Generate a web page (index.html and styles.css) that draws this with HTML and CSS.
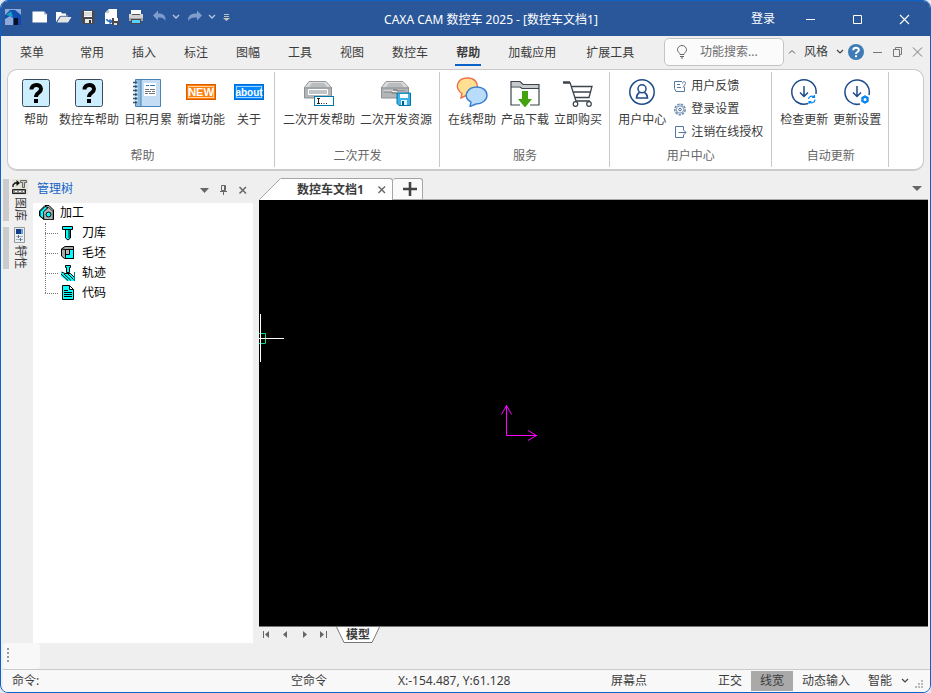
FILE: index.html
```html
<!DOCTYPE html>
<html lang="zh-CN">
<head>
<meta charset="utf-8">
<title>CAXA CAM 数控车 2025</title>
<link rel="stylesheet" href="styles.css">
</head>
<body>
<div class="window">
  <header class="titlebar">
    <div class="quick">
      <svg class="logo" width="16" height="16" viewBox="0 0 16 16"><rect width="16" height="16" fill="#8fa8da"/><path d="M0 9V6L5 1H10L16 6V16H8V9L5 7L0 10Z" fill="#0b4fb0"/><path d="M1 6L6 2L8 8L5 7Z" fill="#1ba3c4"/><path d="M9 9H13V16H9Z" fill="#0a1020"/><path d="M13 8L16 6V16H13Z" fill="#1746a8"/></svg>
      <button class="qbtn" aria-label="新建"><svg width="16" height="16" viewBox="0 0 16 16"><path d="M.5 2.500H12L15 5.500V13.500H.5Z" fill="#fff"/><path d="M12 2.500V5.500H15Z" fill="#a9b8d6"/></svg></button>
      <button class="qbtn" aria-label="打开"><svg width="16" height="16" viewBox="0 0 16 16"><path d="M0 3H5L6 4.500H10V7H4L0 13Z" fill="#fff"/><path d="M4.500 8H15.500L12 13.500H1Z" fill="#e4e4e4"/><path d="M5 6.500H12V7.500H4Z" fill="#b8b8b8"/></svg></button>
      <button class="qbtn" aria-label="保存"><svg width="16" height="16" viewBox="0 0 16 16"><path d="M2 1.500H14.500V15H3.500L1.500 13V2Z" fill="#4a4a4e"/><path d="M4 2H12V8H4Z" fill="#fff"/><path d="M4 4H12M4 6H12" stroke="#bdbdbd"/><path d="M5 10H12V14H5Z" fill="#e8e8e8"/><path d="M9 11H11V14H9Z" fill="#333"/></svg></button>
      <button class="qbtn" aria-label="另存为"><svg width="16" height="16" viewBox="0 0 16 16"><path d="M5 0H13V15H1V4Z" fill="#fff"/><path d="M1 4H5V0Z" fill="#c8c8c8"/><path d="M2.500 10C3 12 5 12.500 7 12.500M5.500 10.500L8 12.500L5.500 14.500" fill="none" stroke="#2b6bc0" stroke-width="1.500"/><path d="M8 9H15V16H8Z" fill="#4a4a4e"/><path d="M10 9H14V12H10Z" fill="#fff"/><path d="M10 14H13V16H10Z" fill="#ddd"/></svg></button>
      <button class="qbtn" aria-label="打印"><svg width="16" height="16" viewBox="0 0 16 16"><path d="M3 1H13V6H3Z" fill="#fff"/><path d="M1 5H15V12H1Z" fill="#d0d0d0"/><path d="M4 5H12V6H4Z" fill="#555"/><path d="M1 9H15V12H1Z" fill="#a8a8a8"/><path d="M3 10H13V15H3Z" fill="#4a4a4a"/><path d="M4 11H12V14H4Z" fill="#5bd0fb"/></svg></button>
      <button class="qbtn" aria-label="撤销"><svg width="16" height="16" viewBox="0 0 16 16"><path d="M6 1.500V4.500H8Q14 5 13.500 12Q12 8.500 8 8.500H6V11.500L1 6.500Z" fill="#7f9ccd"/></svg></button>
      <button class="drop" aria-label="撤销列表"><svg width="8" height="6" viewBox="0 0 8 6"><path d="M1 1L4 4L7 1" fill="none" stroke="#b8c7e2" stroke-width="1.300"/></svg></button>
      <button class="qbtn" aria-label="重做"><svg width="16" height="16" viewBox="0 0 16 16"><path d="M9 1.500V4.500H7Q-.5 5 0 12Q2 8.500 7 8.500H9V11.500L14 6.500Z" fill="#7f9ccd"/></svg></button>
      <button class="drop" aria-label="重做列表"><svg width="8" height="6" viewBox="0 0 8 6"><path d="M1 1L4 4L7 1" fill="none" stroke="#b8c7e2" stroke-width="1.300"/></svg></button>
      <button class="drop tail" aria-label="自定义"><svg width="8" height="8" viewBox="0 0 8 8"><path d="M1 1.500H6M1 3.500H6" stroke="#b9c0cc"/><path d="M0 5H7L3.500 8Z" fill="#c9c4bc"/></svg></button>
    </div>
    <div class="title">CAXA CAM 数控车 2025 - [数控车文档1]</div>
    <div class="caption">
      <button class="login">登录</button>
      <button class="cap" aria-label="最小化"><svg width="12" height="12" viewBox="0 0 12 12"><path d="M1 6.500H10" stroke="#fff"/></svg></button>
      <button class="cap" aria-label="最大化"><svg width="12" height="12" viewBox="0 0 12 12"><path d="M1.500 2.500H9.500V10.500H1.500Z" fill="none" stroke="#fff"/></svg></button>
      <button class="cap" aria-label="关闭"><svg width="12" height="12" viewBox="0 0 12 12"><path d="M1 2L10 11M10 2L1 11" stroke="#fff" stroke-width="1.100"/></svg></button>
    </div>
  </header>

  <nav class="menubar">
    <div class="menus">
      <button class="menu first">菜单</button>
      <button class="menu">常用</button>
      <button class="menu">插入</button>
      <button class="menu">标注</button>
      <button class="menu">图幅</button>
      <button class="menu">工具</button>
      <button class="menu">视图</button>
      <button class="menu">数控车</button>
      <button class="menu active">帮助</button>
      <button class="menu">加载应用</button>
      <button class="menu last">扩展工具</button>
    </div>
    <div class="menuright">
      <label class="search">
        <svg width="12" height="14" viewBox="0 0 12 14"><path d="M4 9.500C4 8 1.500 7 1.500 4.800A4.500 4.300 0 0 1 10.500 4.800C10.500 7 8 8 8 9.500ZM4 11.500H8M5 13H7" fill="none" stroke="#666"/></svg>
        <input type="text" placeholder="功能搜索..." aria-label="功能搜索">
      </label>
      <button class="mini" aria-label="收起功能区"><svg width="8" height="6" viewBox="0 0 8 6"><path d="M1 4.500L4 1.500L7 4.500" fill="none" stroke="#555"/></svg></button>
      <button class="style">风格 <svg width="8" height="6" viewBox="0 0 8 6"><path d="M1 1L4 4L7 1" fill="none" stroke="#444" stroke-width="1.200"/></svg></button>
      <button class="mini help" aria-label="帮助"><svg width="16" height="16" viewBox="0 0 16 16"><circle cx="8" cy="8" r="8" fill="#3f7cb6"/><path d="M5.200 6.200C5.200 2.900 10.800 2.900 10.800 6C10.800 8 8 8 8 10M8 11.300V13.300" fill="none" stroke="#fff" stroke-width="2"/></svg></button>
      <button class="mini" aria-label="文档最小化"><svg width="12" height="12" viewBox="0 0 12 12"><path d="M1 6.500H10" stroke="#777"/></svg></button>
      <button class="mini" aria-label="文档还原"><svg width="12" height="12" viewBox="0 0 12 12"><path d="M1.500 3.500H7.500V10.500H1.500ZM3.500 3.500V1.500H9.500V8.500H7.500" fill="none" stroke="#777"/></svg></button>
      <button class="mini" aria-label="文档关闭"><svg width="12" height="12" viewBox="0 0 12 12"><path d="M1 1.500L10 10.500M10 1.500L1 10.500" stroke="#777"/></svg></button>
    </div>
  </nav>

  <section class="ribbon">
    <div class="group wide">
      <div class="tools">
        <button class="tool"><svg width="28" height="28" viewBox="0 0 28 28"><rect x=".5" y=".5" width="27" height="27" rx="2" fill="#cdeffd" stroke="#3a4a5c"/><path d="M9.500 10.500C9.500 4.500 19 4.500 19 10C19 14 14 13.500 14 18M14 20V24" fill="none" stroke="#000" stroke-width="4"/></svg>帮助</button>
        <button class="tool"><svg width="28" height="28" viewBox="0 0 28 28"><rect x=".5" y=".5" width="27" height="27" rx="2" fill="#cdeffd" stroke="#3a4a5c"/><path d="M9.500 10.500C9.500 4.500 19 4.500 19 10C19 14 14 13.500 14 18M14 20V24" fill="none" stroke="#000" stroke-width="4"/></svg>数控车帮助</button>
        <button class="tool"><svg width="30" height="28" viewBox="2 0 30 28"><path d="M4.500 .5H29.500V27.500H4.500Z" fill="#c5dcf5" stroke="#4783b8"/><path d="M5 1H10V27H5Z" fill="#8fb9dd"/><path d="M10 1V27" stroke="#4783b8"/><path d="M2 3.500H6M2 7.500H6M2 11.500H6M2 15.500H6M2 19.500H6M2 23.500H6" stroke="#35536e" stroke-width="1.600"/><path d="M3 5.500H7M3 9.500H7M3 13.500H7M3 17.500H7M3 21.500H7" stroke="#d7e6f3"/><path d="M13 4H25V17H13Z" fill="#fff"/><path d="M15 6.500H18M19 6.500H24" stroke="#3579bd"/><path d="M14 10.500H18M19 10.500H24M14 12.500H20M21 12.500H24M14 14.500H17M18 14.500H24" stroke="#777"/></svg>日积月累</button>
        <button class="tool"><svg width="30" height="28" viewBox="0 0 30 28"><rect x=".5" y="5.500" width="29" height="15" fill="#ff7d0a" stroke="#d95b00"/><rect x="2.500" y="7.500" width="25" height="11" fill="none" stroke="#ffd2a0"/><text class="newtag" x="15" y="17" text-anchor="middle">NEW</text></svg>新增功能</button>
        <button class="tool about"><svg width="30" height="28" viewBox="0 0 30 28"><rect x=".5" y="5.500" width="29" height="15" fill="#0788fa" stroke="#006bd0"/><rect x="2.500" y="7.500" width="25" height="11" fill="none" stroke="#9bd0ff"/><text class="abouttag" x="15" y="17" text-anchor="middle">about</text></svg>关于</button>
      </div>
      <div class="caption-text">帮助</div>
    </div>
    <div class="group">
      <div class="tools">
        <button class="tool"><svg width="30" height="28" viewBox="0 0 30 28"><path d="M5 2.500H22L28 9H0Z" fill="#d8dadc" stroke="#999"/><path d="M5 8L8 4H20L23 8Z" fill="#babdbf"/><path d="M.5 9H27.500V19H.5Z" fill="#b3b6b8" stroke="#8d9092"/><path d="M4.500 10.500H23.500V15.500H4.500Z" fill="#c1c4c6" stroke="#fff"/><rect x="10.500" y="17.500" width="19" height="9" fill="#fff" stroke="#0077ae"/><path d="M13 19.500H16M14.500 19.500V24.500M13 24.500H16M17 24.500H18M19.500 24.500H20.500M22 24.500H23" stroke="#222"/></svg>二次开发帮助</button>
        <button class="tool"><svg width="32" height="28" viewBox="0 0 32 28"><path d="M6 2.500H23L29 9H1Z" fill="#d8dadc" stroke="#999"/><path d="M6 8L9 4H21L24 8Z" fill="#babdbf"/><path d="M1.500 9H28.500V19H1.500Z" fill="#b3b6b8" stroke="#8d9092"/><path d="M4 12.500H25" stroke="#eee" stroke-width="2"/><path d="M13 11H17V12H25M4 13H12V14H17" fill="none" stroke="#666"/><path d="M17 14H30.500V26.500H19L17 24.500Z" fill="#3cb2e6" stroke="#0074aa"/><path d="M20 15H28V19H20Z" fill="#fff"/><path d="M21 21H27V26H21Z" fill="#e3f4fc"/><path d="M22 22H24V26H22Z" fill="#005f90"/></svg>二次开发资源</button>
      </div>
      <div class="caption-text">二次开发</div>
    </div>
    <div class="group">
      <div class="tools">
        <button class="tool"><svg width="32" height="30" viewBox="0 0 32 30"><path d="M11.500 1C18 1 21.500 5 21.500 10C21.500 15 17 17.500 11 18L5 21L6 16.500C-2 11 1 1 11.500 1Z" fill="#ffe092" stroke="#ee7047" stroke-width="1.400"/><path d="M21 10C27 10 31 13.500 31 18.500C31 23 26 27 20 27L14 29.500L15 25C6 20 11 10 21 10Z" fill="#b9dcfb" stroke="#397ed0" stroke-width="1.400"/></svg>在线帮助</button>
        <button class="tool"><svg width="30" height="28" viewBox="0 0 30 28"><path d="M1 2.500H10L13 5.500H29V9.500H12L10 7.500H1Z" fill="#c6cacd"/><path d="M10 26H1V2.500H10L13 5.500H29V26H20M1 8H10L12 9.500H29" fill="none" stroke="#3b444b" stroke-width="1.200"/><path d="M12 12H18V20H22L15 28.500L8 20H12Z" fill="#43a30e"/></svg>产品下载</button>
        <button class="tool"><svg width="30" height="28" viewBox="0 0 30 28"><path d="M0 3.500H7" stroke="#3b444b" stroke-width="2.500"/><path d="M7 3.500L13 22H27M9 7.500H29L26 18.500H12M10 13H27" fill="none" stroke="#3b444b" stroke-width="1.300"/><circle cx="12.500" cy="25" r="2.300" fill="#fff" stroke="#3b444b" stroke-width="1.200"/><circle cx="26" cy="25" r="2.300" fill="#fff" stroke="#3b444b" stroke-width="1.200"/></svg>立即购买</button>
      </div>
      <div class="caption-text">服务</div>
    </div>
    <div class="group">
      <div class="tools user">
        <button class="tool"><svg width="28" height="28" viewBox="0 0 28 28"><g fill="none" stroke="#1d4c89" stroke-width="1.500"><circle cx="14" cy="13" r="12.200"/><circle cx="14" cy="9.800" r="4"/><path d="M11.500 13.500C9 15 8.500 17 8.500 19H19.500C19.500 17 19 15 16.500 13.500"/></g></svg>用户中心</button>
        <div class="stack">
          <button class="row"><svg width="13" height="13" viewBox="0 0 13 13"><path d="M8 1.500H.5V8.500L2 11.500H10.500V7M3 4.500H6M3 7.500H7M8.500 3.500C8.500 .8 12 1 11.500 3.500L9 7.500" fill="none" stroke="#56789f"/></svg>用户反馈</button>
          <button class="row"><svg width="13" height="13" viewBox="0 0 13 13"><circle cx="6" cy="6.500" r="5.200" fill="none" stroke="#7290b3" stroke-width="1.600" stroke-dasharray="2.500 1"/><circle cx="6" cy="6.500" r="3.700" fill="none" stroke="#7290b3"/><circle cx="6" cy="6.500" r="1.300" fill="none" stroke="#466b96"/></svg>登录设置</button>
          <button class="row"><svg width="13" height="13" viewBox="0 0 13 13"><path d="M9.500 4V.5H1.500V11.500H9.500V9M4.500 6.500H12M9.500 4L12 6.500L9.500 9" fill="none" stroke="#56789f"/></svg>注销在线授权</button>
        </div>
      </div>
      <div class="caption-text">用户中心</div>
    </div>
    <div class="group">
      <div class="tools">
        <button class="tool"><svg width="28" height="28" viewBox="0 0 28 28"><path d="M18 24.500A12.200 12.200 0 1 1 26 15" fill="none" stroke="#1d4c89" stroke-width="1.500"/><path d="M14 7V17.500M10 13.500L14 17.500L18 13.500" fill="none" stroke="#1d4c89" stroke-width="1.500"/><path d="M18.500 20A3.300 3.300 0 0 1 24 18M25 20.500A3.300 3.300 0 0 1 19.500 23M24.500 16V18.500H22M19 25V22.500H21.500" fill="none" stroke="#0987f0" stroke-width="1.200"/></svg>检查更新</button>
        <button class="tool"><svg width="28" height="28" viewBox="0 0 28 28"><path d="M17 25A12.200 12.200 0 1 1 26 16" fill="none" stroke="#1d4c89" stroke-width="1.500"/><path d="M14 7V17.500M10 13.500L14 17.500L18 13.500" fill="none" stroke="#1d4c89" stroke-width="1.500"/><circle cx="22" cy="20.500" r="2.600" fill="none" stroke="#0987f0" stroke-width="2.200"/><path d="M22 16.500V18M22 23V24.500M18.500 18.500L20 19.500M24 21.500L25.500 22.500M25.500 18.500L24 19.500M20 21.500L18.500 22.500" stroke="#0987f0" stroke-width="2"/></svg>更新设置</button>
      </div>
      <div class="caption-text">自动更新</div>
    </div>
  </section>

  <main class="work">
    <aside class="sidetabs">
      <button class="sidetab"><svg width="16" height="16" viewBox="0 0 16 16"><path d="M0 0H16V16H0Z" fill="#e4e4d8"/><path d="M1 8V6L3 4H6" fill="none" stroke="#111" stroke-width="1.300"/><path d="M4.500 1L8 4L4.500 7Z" fill="#111"/><path d="M8.500 1.500H14.500V3.500H12.500V8.500H10.500V3.500H8.500Z" fill="#ccc" stroke="#666"/><path d="M.5 10.500H13.500V14.500H.5Z" fill="#888" stroke="#222"/><path d="M3 12.500H5M7 12.500H9M11 12.500H12" stroke="#fff"/></svg><span>图库</span></button>
      <button class="sidetab"><svg width="16" height="16" viewBox="0 0 16 16"><path d="M2.500 .5H12.500V15.500H2.500Z" fill="#e8eef5" stroke="#999"/><path d="M4 2H9V7H4Z" fill="#173c86"/><path d="M9 2H11V7H9Z" fill="#69a2d6"/><path d="M4 9.500H11M4 12.500H11" stroke="#a5adb6"/><path d="M6.500 8V11M8.500 11V14" stroke="#567"/></svg><span>特性</span></button>
    </aside>

    <section class="panel">
      <div class="panelhead">
        <h2>管理树</h2>
        <button aria-label="菜单"><svg width="12" height="12" viewBox="0 0 12 12"><path d="M1 3H10L5.500 8Z" fill="#666"/></svg></button>
        <button aria-label="固定"><svg width="12" height="12" viewBox="0 0 12 12"><path d="M3.500 .5H7.500V5.500H3.500ZM6.500 1V5M2 6.500H9M5.500 6.500V10" fill="none" stroke="#666"/></svg></button>
        <button aria-label="关闭"><svg width="12" height="12" viewBox="0 0 12 12"><path d="M2.500 2L9 8.500M9 2L2.500 8.500" stroke="#666" stroke-width="1.500"/></svg></button>
      </div>
      <div class="tree">
        <div class="node"><svg width="16" height="16" viewBox="0 0 16 16"><path d="M.5 6L6 .5H10L14.500 5V14.500H5L.5 11Z" fill="#aaa" stroke="#000"/><path d="M1 6.500L6 1.500L9 2.500L4.500 7V14L1 11Z" fill="#0ff" stroke="#000"/><path d="M4.500 7L9.500 2.500L14 6.500V14.500H5Z" fill="#b5b5b5" stroke="#000" stroke-width=".6"/><circle cx="9.500" cy="9.500" r="2.500" fill="#0ff" stroke="#000"/></svg>加工</div>
        <ul>
          <li class="node"><svg width="16" height="16" viewBox="1 0 16 16"><path d="M2.500 1.500H12.500V4.500H10.500V13L8 15L5.500 13V4.500H2.500Z" fill="#0ff" stroke="#000"/><path d="M3 4.500H12M9 5V13" stroke="#000"/></svg>刀库</li>
          <li class="node"><svg width="16" height="16" viewBox="1 0 16 16"><path d="M1.500 4L5 1.500H13.500V13.500H4.500L1.500 11Z" fill="#aaa" stroke="#000"/><path d="M5.500 4.500H13.500V13.500H5.500Z" fill="#0ff" stroke="#000"/><path d="M1.500 4L5.500 4.500V13.500M5.500 9.500H9.500V4.500" fill="none" stroke="#000"/><path d="M6 5H9V9H6Z" fill="#bbb"/></svg>毛坯</li>
          <li class="node"><svg width="16" height="16" viewBox="1 0 16 16"><path d="M5.500 .5H10.500V2.500H9.500V7.500H6.500V2.500H5.500Z" fill="#0ff" stroke="#000"/><path d="M1 7L5 9H11L14 12V16H7L1 11Z" fill="#0ff"/><path d="M1.500 7L5 8.500H10.500L14 12M1 9L8 15.500M4 9L11 15.500M8 9L13.500 14.500" fill="none" stroke="#000"/><path d="M14.500 7V16" stroke="#087878"/></svg>轨迹</li>
          <li class="node"><svg width="16" height="16" viewBox="1 0 16 16"><path d="M2.500 .5H9.500L13.500 4.500V14.500H2.500Z" fill="#0ff" stroke="#000"/><path d="M9.500 .5V4.500H13.500Z" fill="#fff" stroke="#000"/><path d="M4 5.500H8M4 7.500H12M4 9.500H12M4 11.500H12" stroke="#000"/></svg>代码</li>
        </ul>
      </div>
    </section>

    <section class="document">
      <div class="doctabs">
        <svg width="22" height="22" viewBox="0 0 22 22"><path d="M0 22L22 0V22Z" fill="#fff"/><path d="M.5 21.500L21.500 .5" stroke="#a5a5a5"/></svg>
        <div class="doctab"><span>数控车文档1</span><button aria-label="关闭文档"><svg width="10" height="10" viewBox="0 0 10 10"><path d="M2.500 1.500L9 8M9 1.500L2.500 8" stroke="#666" stroke-width="1.400"/></svg></button></div>
        <button class="newtab" aria-label="新建文档"><svg width="14" height="14" viewBox="0 0 14 14"><path d="M0 7H14M7 0V14" stroke="#444" stroke-width="2.600"/></svg></button>
        <button class="tablist" aria-label="文档列表"><svg width="10" height="6" viewBox="0 0 10 6"><path d="M0 0H10L5 5Z" fill="#666"/></svg></button>
      </div>
      <div class="canvas">
        <svg class="cross" width="26" height="48" viewBox="0 0 26 48"><path d="M0 19.500H6.500V29.500H0" fill="none" stroke="#10d987"/><path d="M1.500 0V48M0 24.500H25" stroke="#fff"/></svg>
        <svg class="axis" width="38" height="38" viewBox="0 0 38 38"><path d="M6.500 1V31.500H37M6.500 1.500Q4 6 1.500 10.500M6.500 1.500Q9 6 11.500 10.500M36.500 31.500L28 26.500M36.500 31.500L28 36.500" fill="none" stroke="#f0f"/></svg>
      </div>
      <div class="sheetbar">
        <button aria-label="第一页"><svg width="8" height="8" viewBox="0 0 8 8"><path d="M1.500 0V7" stroke="#666"/><path d="M7 0V7L3 3.500Z" fill="#666"/></svg></button>
        <button aria-label="上一页"><svg width="8" height="8" viewBox="0 0 8 8"><path d="M6 0V7L2 3.500Z" fill="#666"/></svg></button>
        <button aria-label="下一页"><svg width="8" height="8" viewBox="0 0 8 8"><path d="M3 0V7L7 3.500Z" fill="#666"/></svg></button>
        <button aria-label="最后一页"><svg width="8" height="8" viewBox="0 0 8 8"><path d="M7.500 0V7" stroke="#666"/><path d="M1 0V7L5 3.500Z" fill="#666"/></svg></button>
        <button class="sheet"><svg width="8" height="16" viewBox="0 0 8 16"><path d="M0 0H8V16Z" fill="#fff"/><path d="M.5 0L8 15.500" stroke="#777"/></svg><span>模型</span><svg width="8" height="16" viewBox="0 0 8 16"><path d="M0 0H8L0 16Z" fill="#fff"/><path d="M7.500 0L0 15.500" stroke="#777"/></svg></button>
      </div>
    </section>
  </main>

  <div class="dock"><div class="dockbar"><svg width="4" height="16" viewBox="0 0 4 16"><path d="M1 1H3M1 5H3M1 9H3M1 13H3" stroke="#999" stroke-width="2"/></svg></div></div>

  <footer class="status">
    <span>命令:</span>
    <span>空命令</span>
    <span>X:-154.487, Y:61.128</span>
    <span>屏幕点</span>
    <div class="toggles">
      <button>正交</button>
      <button class="on">线宽</button>
      <button>动态输入</button>
      <label class="snap"><select aria-label="捕捉方式"><option>智能</option></select><svg width="8" height="6" viewBox="0 0 8 6"><path d="M1 1L4 4L7 1" fill="none" stroke="#444" stroke-width="1.200"/></svg></label>
      <svg class="grip" width="9" height="9" viewBox="0 0 9 9"><path d="M6 0H8V2H6ZM3 3H5V5H3ZM6 3H8V5H6ZM0 6H2V8H0ZM3 6H5V8H3ZM6 6H8V8H6Z" fill="#bbb"/></svg>
    </div>
  </footer>
</div>
</body>
</html>
```
FILE: styles.css
```css
* { box-sizing: border-box; }
body {
  margin: 0;
  background: #e6e9ee;
  color: #3c3c3c;
  font: 12px/16px "Noto Sans", "Noto Sans CJK SC", sans-serif;
}
button, input, select {
  font: inherit;
  color: inherit;
  border: 0;
  padding: 0;
  margin: 0;
  background: none;
}
button { white-space: nowrap; }
svg { display: block; flex: none; }

.window {
  display: flex;
  flex-direction: column;
  min-height: 100vh;
  border: 1px solid #0b62c8;
  border-radius: 8px;
  overflow: hidden;
  background: #efefef;
}

/* title bar */
.titlebar {
  display: flex;
  align-items: center;
  height: 35px;
  padding: 0 14px 0 4px;
  background: #2a579a;
  color: #fff;
}
.quick { display: flex; align-items: center; gap: 8px; padding-bottom: 3px; }
.logo { margin-right: 3px; }
.drop { width: 8px; margin-left: -4px; }
.drop.tail { margin: 0 0 0 -1px; }
.title { flex: 1; text-align: center; padding-top: 2px; }
.caption { display: flex; align-items: center; }
.login { margin-right: 12px; }
.cap { width: 47px; display: flex; justify-content: center; }
.cap:last-child { margin-right: -12px; }

/* menu bar */
.menubar {
  display: flex;
  justify-content: space-between;
  height: 32px;
  padding: 0 6px 0 19px;
}
.menus { display: flex; gap: 26px; }
.menu { padding: 5px 1px 0; height: 30px; border-bottom: 2px solid transparent; }
.menu.first { padding-left: 0; margin-right: 8px; }
.menu.last { margin-left: 2px; }
.menu.active { border-color: #0b62c8; font-weight: bold; }
.menuright { display: flex; align-items: center; gap: 8px; }
.search {
  display: flex;
  align-items: center;
  gap: 12px;
  width: 120px;
  height: 28px;
  margin-right: -4px;
  padding-left: 11px;
  border: 1px solid #c4c4c4;
  border-radius: 5px;
  background: #fbfbfb;
}
.search input { flex: 1; min-width: 0; outline: 0; }
.search input::placeholder { color: #6e6e6e; opacity: 1; }
.style { display: flex; align-items: center; gap: 8px; margin-right: -4px; }

/* ribbon */
.ribbon {
  display: flex;
  margin: 1px 6px 0;
  height: 102px;
  padding: 2px 0;
  border: 1px solid #c8c8c8;
  border-bottom: 2px solid #cbcbcb;
  border-radius: 10px;
  background: #fff;
}
.group {
  display: flex;
  flex-direction: column;
  justify-content: space-between;
  padding: 5px 7px 3px 8px;
  border-right: 1px solid #c8c8c8;
}
.group.wide { padding-left: 10px; padding-right: 7px; }
.tools { display: flex; gap: 5px; }
.tools.user { gap: 8px; }
.tool {
  display: flex;
  flex-direction: column;
  align-items: center;
  justify-content: flex-end;
  gap: 5px;
  min-width: 36px;
  height: 51px;
}
.tool.about { margin-left: 1px; }
.stack { display: flex; flex-direction: column; gap: 7px; padding-top: 1px; }
.row { display: flex; align-items: center; gap: 4px; text-align: left; }
.group:nth-child(4) { padding-right: 8px; }
.caption-text { text-align: center; color: #666; }
.newtag { font: bold 11px "Liberation Sans", sans-serif; fill: #fff; }
.abouttag { font: bold 10px "Liberation Sans", sans-serif; fill: #fff; }

/* work area */
.work { display: flex; flex: 1; padding: 7px 2px 0; }
.sidetabs { width: 30px; display: flex; flex-direction: column; gap: 6px; padding-top: 1px; }
.sidetab {
  display: flex;
  flex-direction: column;
  align-items: center;
  gap: 2px;
  height: 42px;
  width: 28px;
  border-left: 6px solid #cbcbcb;
}
/* the label is laid out flat, then turned on its side */
.sidetab span { width: 24px; height: 16px; margin: 4px 0; transform: rotate(90deg); }
.panel { display: flex; flex-direction: column; flex: 0 0 220px; }
.panelhead { display: flex; align-items: center; gap: 7px; height: 25px; padding: 0 4px 3px; }
.panelhead h2 { flex: 1; margin: 0; font-size: 12px; font-weight: normal; color: #1565c8; }
.panelhead button { padding-top: 3px; }
.tree { flex: 1; background: #fff; color: #000; }
.node { display: flex; align-items: center; gap: 5px; height: 20px; padding-left: 6px; }
.tree ul { position: relative; list-style: none; margin: 0 0 0 12px; padding: 0; }
.tree ul::before {
  content: "";
  position: absolute;
  top: 0;
  bottom: 10px;
  border-left: 1px dotted #777;
}
.tree li { padding: 0; }
.tree li::before { content: ""; width: 13px; margin-right: -2px; border-top: 1px dotted #777; }

/* document */
.document { display: flex; flex-direction: column; flex: 1; margin-left: 6px; }
.doctabs { display: flex; height: 22px; border-bottom: 1px solid #aaa; }
.doctab {
  display: flex;
  align-items: center;
  gap: 12px;
  height: 22px;
  padding: 0 6px 0 16px;
  border: 1px solid #a5a5a5;
  border-width: 1px 1px 0 0;
  border-radius: 0 3px 0 0;
  background: #fff;
  font-weight: bold;
}
.newtab {
  display: flex;
  align-items: center;
  justify-content: center;
  width: 30px;
  height: 21px;
  padding-left: 5px;
  border: 1px solid #a5a5a5;
  border-width: 1px 1px 0 0;
  border-radius: 3px 3px 0 0;
  background: #fafafa;
}
.tablist { margin-left: auto; padding-right: 6px; }
.canvas { position: relative; flex: 1; background: #000; }
.cross { position: absolute; left: 0; top: 114px; }
.axis { position: absolute; left: 241px; top: 204px; }
.sheetbar { display: flex; gap: 11px; height: 17px; padding-left: 3px; border-top: 1px solid #777; }
.sheetbar > button:not(.sheet) { width: 8px; }
.sheetbar > .sheet { display: flex; height: 16px; margin-left: -2px; font-weight: bold; }
.sheet span { height: 16px; padding: 0 2px; background: #fff; border-bottom: 1px solid #777; line-height: 15px; }

/* bottom bars */
.dock { height: 26px; padding-left: 2px; }
.dockbar { width: 37px; height: 26px; padding: 5px 3px; border-radius: 4px; background: #f8f8f8; }
.status {
  display: grid;
  grid-template-columns: 279fr 107fr 213fr 98fr auto;
  align-items: center;
  height: 23px;
  margin-left: 2px;
  padding: 0 6px 0 9px;
  border-top: 1px solid #cbcbcb;
  background: #f8f8f8;
  white-space: nowrap;
}
.toggles { display: flex; align-items: center; }
.toggles button { height: 20px; padding: 0 9px; }
.toggles .on { background: #a9a9a9; }
.snap { display: flex; align-items: center; gap: 9px; padding-left: 9px; }
.snap select { appearance: none; width: 24px; outline: 0; }
.grip { margin: 6px 0 0 6px; }
```
